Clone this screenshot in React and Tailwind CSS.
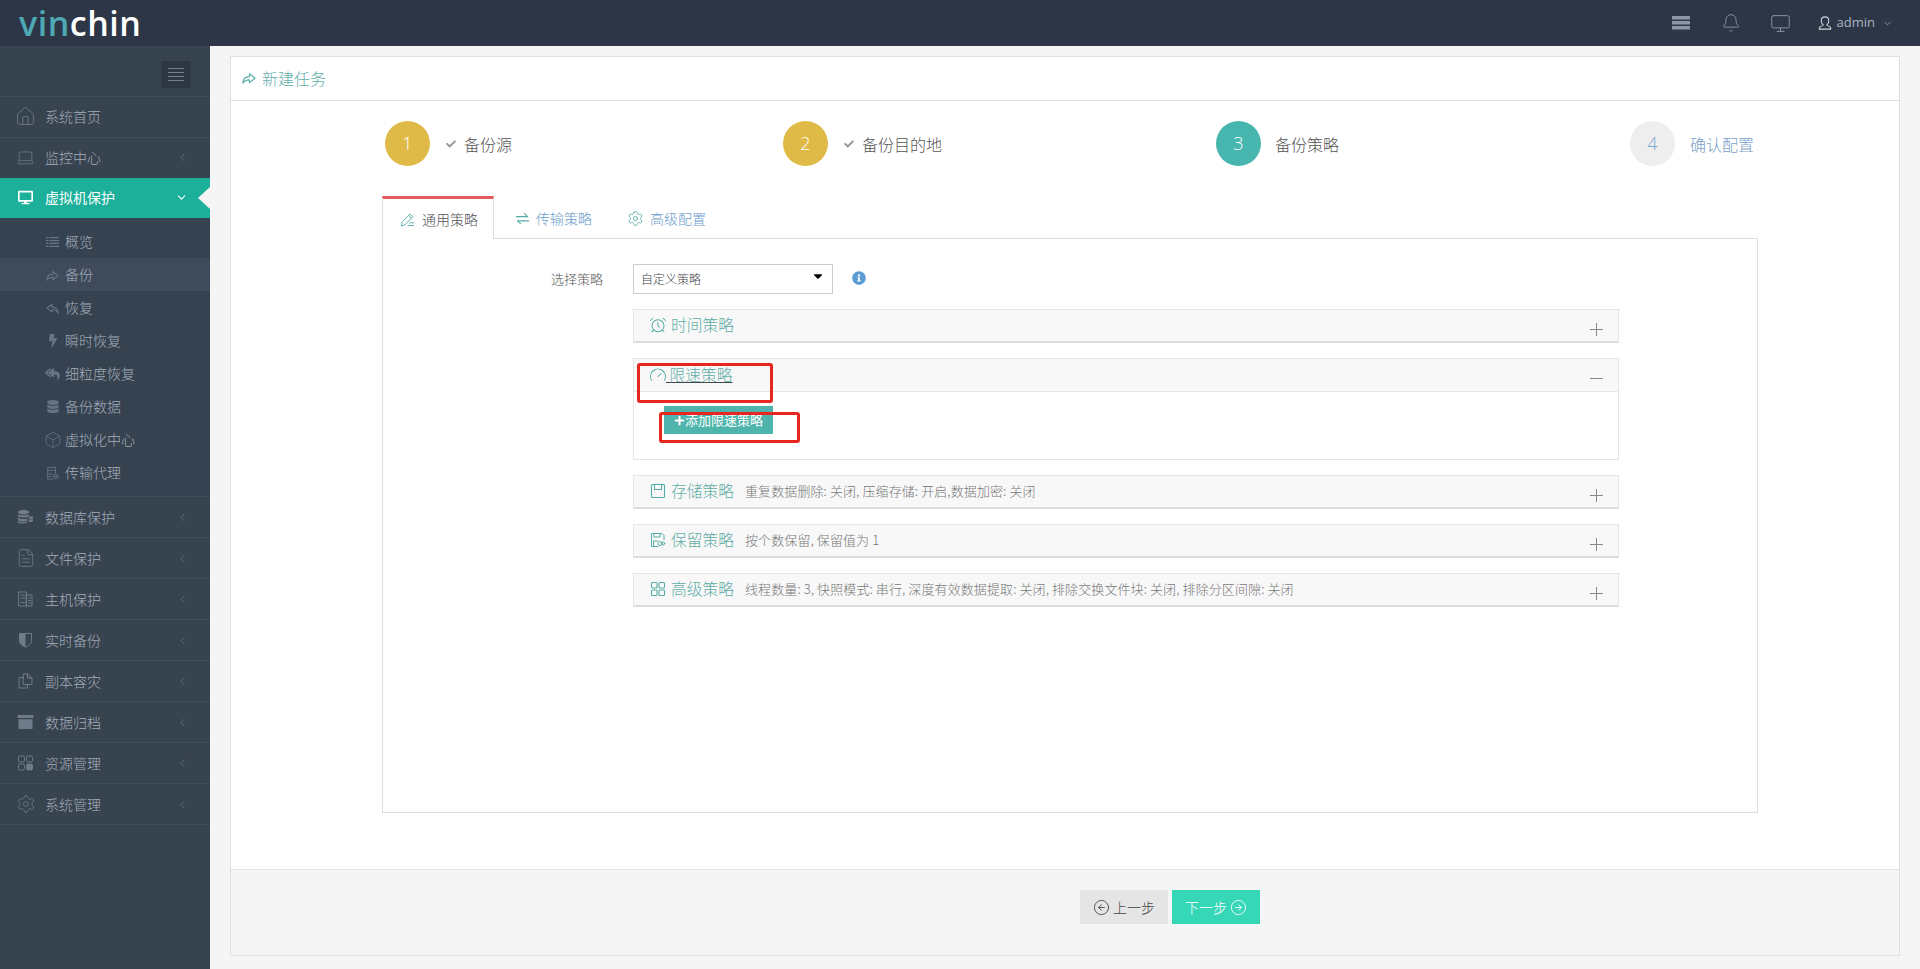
import { House, Laptop, Bell, Monitor, Settings, ChevronLeft, ChevronDown, AlarmClock, Gauge, CircleArrowLeft, CircleArrowRight, Box, FileText } from 'lucide-react';
import { FaBolt, FaCheck, FaDatabase, FaDesktop, FaInfoCircle, FaReplyAll, FaPlus, FaCaretDown } from 'react-icons/fa';

function Svg({ className, children, vb = '0 0 16 16', sw = 1 }) {
    return (
        <svg viewBox={vb} className={className} fill="none" stroke="currentColor" strokeWidth={sw} strokeLinecap="round" strokeLinejoin="round">
            {children}
        </svg>
    );
}

const ListIcon = ({ className }) => (
    <Svg className={className} sw={1.4}>
        <path d="M1 3h2M5 3h10M1 6.300h2M5 6.300h10M1 9.600h2M5 9.600h10M1 13h2M5 13h10" />
    </Svg>
);
const ShareIcon = ({ className }) => (
    <Svg className={className} sw={1.2}>
        <path d="M1.500 14c.2-4.500 3-7 7-7V4l6 4.800-6 4.700v-3c-3 0-5.200.8-7 3.500z" />
    </Svg>
);
const ReplyIcon = ({ className }) => (
    <Svg className={className} sw={1.2}>
        <path d="M14.500 14c-.2-4.500-3-7-7-7V4l-6 4.300 6 4.200v-2.700c3 0 5.200 1.200 7 4.200z" />
    </Svg>
);
const DocGearIcon = ({ className }) => (
    <Svg className={className}>
        <path d="M8 15H2.500V1.500h9V8M2.500 5h9M2.500 9h5M2.500 12h4" />
        <circle cx="11.500" cy="12" r="2.800" />
        <circle cx="11.500" cy="12" r="0.800" />
    </Svg>
);
const DbStackIcon = ({ className }) => (
    <svg viewBox="0 0 18 16" className={className} fill="currentColor">
        <ellipse cx="7" cy="2.800" rx="6" ry="2.500" />
        <path d="M1 5c1.500 1.500 10.500 1.500 12 0v2.300c-1.500 1.700-10.500 1.700-12 0zM1 8.700c1.500 1.500 8 1.700 10 .8v2.800c-2 .9-8.500.6-10-.8zM1 12.300c1.500 1.500 8 1.700 10 .8v.6c-2 1.500-8.500 1.500-10 0z" />
        <path d="M12.500 8l4.500-1v2c-1 .8-3 1.200-4.500 1zM12.500 11l4.500-.8v2c-1 .8-3 1.200-4.500 1z" />
    </svg>
);
const HostIcon = ({ className }) => (
    <Svg className={className}>
        <path d="M1.500 1h7.500v14H1.500zM9 4h5.500v11H9zM3.500 4h3.500M3.500 7h3.500M3.500 11.500h3.500M11 7h2M11 9.500h2M11 12h2" />
    </Svg>
);
const ShieldIcon = ({ className }) => (
    <svg viewBox="0 0 16 16" className={className}>
        <path d="M2 1.500h12v7c0 3.300-2.800 5.500-6 6.500-3.200-1-6-3.200-6-6.500z" fill="none" stroke="currentColor" strokeWidth="1" />
        <path d="M2 1.500h6V15c-3.200-1-6-3.200-6-6.500z" fill="currentColor" />
    </svg>
);
const CopyIcon = ({ className }) => (
    <Svg className={className}>
        <path d="M6 4.500H1.500V15h8.500v-3.500M6 1h4l4.500 4v6.500H6zM10 1v4h4.500" />
    </Svg>
);
const ArchiveIcon = ({ className }) => (
    <svg viewBox="0 0 16 16" className={className} fill="currentColor">
        <path d="M0 1h16v3H0zM1 5.200h14V15H1z" />
    </svg>
);
const GridIcon = ({ className }) => (
    <svg viewBox="0 0 16 16" className={className} fill="none" stroke="currentColor">
        <rect x="1" y="1" width="6" height="6" rx="1.500" />
        <rect x="9" y="1" width="6" height="6" rx="1.500" />
        <rect x="1" y="9" width="6" height="6" rx="1.500" />
        <rect x="9" y="9" width="6" height="6" rx="1.500" fill="currentColor" />
    </svg>
);
const Grid2Icon = ({ className }) => (
    <Svg className={className} sw={1.100}>
        <rect x="1.500" y="1.500" width="5.500" height="5.500" rx="1" />
        <rect x="9" y="1.500" width="5.500" height="5.500" rx="1" />
        <rect x="1.500" y="9" width="5.500" height="5.500" rx="1" />
        <rect x="9" y="9" width="5.500" height="5.500" rx="1" />
    </Svg>
);
const SaveIcon = ({ className }) => (
    <Svg className={className} sw={1.100}>
        <rect x="1.500" y="1.500" width="13" height="13" rx="1" />
        <path d="M4.500 1.500v5h7v-5" />
    </Svg>
);
const KeepIcon = ({ className }) => (
    <Svg className={className} sw={1}>
        <path d="M8 14.500H1.500v-13h10.500l2 2v4M4 1.500V5h6V1.500M3.500 14.500V9h4" />
        <circle cx="10" cy="11.500" r="2" />
        <circle cx="13.200" cy="11.500" r="1.500" />
    </Svg>
);
const PenIcon = ({ className }) => (
    <Svg className={className}>
        <path d="M1.500 14.500l1-4L10.500 2l3 3-8 8.500zM9 3.500l3 3M8.500 14.500h6M10.500 11.500h4" />
    </Svg>
);
const SwapIcon = ({ className }) => (
    <Svg className={className} sw={1.200}>
        <path d="M1.500 6h12L10 2.800M14.500 10.500h-12L6 13.500" />
    </Svg>
);
const ServerBars = ({ className }) => (
    <svg viewBox="0 0 18 14" className={className} fill="currentColor">
        <path d="M0 0h18v3.600H0zM0 5h18v3.600H0zM0 10h18v3.600H0z" />
    </svg>
);
const UserLine = ({ className }) => (
    <Svg className={className} sw={1.200}>
        <path d="M1.500 15h13v-1.500c0-1.500-3.500-2-4.500-3.200 1.500-1.300 2.300-3 2.300-5C12.300 2.800 10.500 1 8 1S3.700 2.800 3.700 5.300c0 2 .8 3.700 2.300 5-1 1.200-4.500 1.700-4.500 3.200z" />
    </Svg>
);
const MenuLines = ({ className }) => (
    <svg viewBox="0 0 16 13" className={className} stroke="currentColor" strokeWidth="1">
        <path d="M0 .5h16M0 4.500h16M0 8.500h16M0 12.500h16" />
    </svg>
);

const subMenu = [
    { label: '概览', icon: ListIcon, size: 'w-[15px] h-[14px]' },
    { label: '备份', icon: ShareIcon, active: true, size: 'w-[15px] h-[14px]' },
    { label: '恢复', icon: ReplyIcon, size: 'w-[15px] h-[14px]' },
    { label: '瞬时恢复', icon: FaBolt, size: 'w-[12px] h-[13px]' },
    { label: '细粒度恢复', icon: FaReplyAll, size: 'w-[15px] h-[14px]' },
    { label: '备份数据', icon: FaDatabase, size: 'w-[12px] h-[13px]' },
    { label: '虚拟化中心', icon: Box, size: 'w-[18px] h-[18px]' },
    { label: '传输代理', icon: DocGearIcon, size: 'w-[15px] h-[14px]' },
];

const menuBottom = [
    { label: '数据库保护', icon: DbStackIcon, size: 'w-[17px] h-[16px]' },
    { label: '文件保护', icon: FileText, size: 'w-[20px] h-[20px]' },
    { label: '主机保护', icon: HostIcon, size: 'w-[17px] h-[16px]' },
    { label: '实时备份', icon: ShieldIcon, size: 'w-[17px] h-[16px]' },
    { label: '副本容灾', icon: CopyIcon, size: 'w-[17px] h-[16px]' },
    { label: '数据归档', icon: ArchiveIcon, size: 'w-[17px] h-[16px]' },
    { label: '资源管理', icon: GridIcon, size: 'w-[17px] h-[16px]' },
    { label: '系统管理', icon: Settings, size: 'w-[20px] h-[20px]' },
];

function MenuItem({ item }) {
    const Icon = item.icon;
    return (
        <div className="flex items-center h-[41px] border-b border-[#424e5c] pl-[17px] pr-[21px]">
            <span className="flex justify-center w-[17px] text-[#6f7b89]">
                <Icon className={`shrink-0 ${item.size}`} strokeWidth={1} />
            </span>
            <span className="ml-[11px] text-[14px] text-[#a3adba] font-light">{item.label}</span>
            <ChevronLeft className="ml-auto w-[13px] h-[13px] text-[#6f7b89]" strokeWidth={1.25} />
        </div>
    );
}

function Sidebar() {
    return (
        <aside className="w-[210px] shrink-0 bg-[#384350]">
            <div className="flex justify-end pt-[15px] pr-[19px] h-[50px]">
                <div className="flex items-center justify-center w-[30px] h-[27px] bg-[#2e3845]">
                    <MenuLines className="w-[16px] h-[13px] text-[#77818d]" />
                </div>
            </div>
            <div className="border-t border-[#424e5c]">
                <div className="flex items-center h-[41px] pb-[2px] border-b border-[#424e5c] pl-[17px] pr-[21px]">
                    <span className="flex justify-center w-[17px] text-[#6f7b89]">
                        <House className="shrink-0 w-[21px] h-[21px]" strokeWidth={1} />
                    </span>
                    <span className="ml-[11px] text-[14px] text-[#a3adba] font-light">系统首页</span>
                </div>
                <div className="flex items-center h-[40px] pb-[2px] pl-[17px] pr-[21px]">
                    <span className="flex justify-center w-[17px] text-[#6f7b89]">
                        <Laptop className="shrink-0 w-[19px] h-[19px]" strokeWidth={1} />
                    </span>
                    <span className="ml-[11px] text-[14px] text-[#a3adba] font-light">监控中心</span>
                    <ChevronLeft className="ml-auto w-[13px] h-[13px] text-[#6f7b89]" strokeWidth={1.25} />
                </div>
            </div>
            <div className="relative flex items-center h-[40px] pb-[1px] bg-[#1cb09a] pl-[18px] pr-[22px] text-white">
                <FaDesktop className="w-[15px] h-[15px]" />
                <span className="ml-[12px] text-[14px]">虚拟机保护</span>
                <ChevronDown className="ml-auto w-[13px] h-[13px]" strokeWidth={2} />
                <div className="absolute right-0 top-[9px] w-0 h-0 border-y-[11px] border-y-transparent border-r-[12px] border-r-[#f5f5f5]"></div>
            </div>
            <div className="py-[7px] border-b border-[#424e5c] bg-[#364250]">
                {subMenu.map((item) => {
                    const Icon = item.icon;
                    return (
                        <div key={item.label} className={`flex items-center h-[33px] pl-[45px] ${item.active ? 'bg-[#3f4b5b]' : ''}`}>
                            <span className="w-[15px] flex justify-center text-[#687482]">
                                <Icon className={`shrink-0 ${item.size}`} strokeWidth={1} />
                            </span>
                            <span className="ml-[5px] text-[14px] text-[#a3adba] font-light">{item.label}</span>
                        </div>
                    );
                })}
            </div>
            {menuBottom.map((item) => (
                <MenuItem key={item.label} item={item} />
            ))}
        </aside>
    );
}

function TopBar() {
    return (
        <header className="flex items-center h-[46px] shrink-0 bg-[#2c3646]">
            <div className="ml-[19px] text-[34px] leading-[44px] tracking-[0.5px] font-semibold" style={{ fontFamily: '"Open Sans", sans-serif' }}>
                <span className="text-[#4fa9b5]">vin</span>
                <span className="text-white">chin</span>
            </div>
            <div className="ml-auto flex items-center">
                <ServerBars className="w-[18px] h-[14px] text-[#8c97a6]" />
                <Bell className="ml-[31px] w-[20px] h-[20px] text-[#8a95a3]" strokeWidth={1.1} />
                <Monitor className="ml-[29px] w-[21px] h-[21px] text-[#8a95a3]" strokeWidth={1.1} />
                <UserLine className="ml-[27px] w-[14px] h-[14px] text-[#cfd6de]" />
                <span className="ml-[5px] text-[13px] text-[#aab3bf]" style={{ fontFamily: '"Open Sans", sans-serif' }}>admin</span>
                <ChevronDown className="ml-[7px] mr-[27px] w-[11px] h-[11px] text-[#aab3bf]" strokeWidth={1.5} />
            </div>
        </header>
    );
}

const steps = [
    { n: 1, label: '备份源', done: true, width: 'w-[398px]' },
    { n: 2, label: '备份目的地', done: true, width: 'w-[433px]' },
    { n: 3, label: '备份策略', width: 'w-[414px]', current: true },
    { n: 4, label: '确认配置', width: 'w-[130px]', todo: true },
];

function Steps() {
    return (
        <div className="flex pl-[154px] pt-[20px]">
            {steps.map((s) => (
                <div key={s.n} className={`flex items-center ${s.width}`}>
                    <div className={`flex items-center justify-center w-[45px] h-[45px] rounded-full text-[18px] font-light ${s.done ? 'bg-[#e0ba47] text-white' : s.current ? 'bg-[#47b6ae] text-white' : 'bg-[#eeeeee] text-[#7ea6d3]'}`} style={{ fontFamily: '"Open Sans", sans-serif' }}>
                        {s.n}
                    </div>
                    {s.done && <FaCheck className="ml-[16px] w-[10px] h-[10px] text-[#999]" />}
                    <span className={`text-[16px] font-light ${s.done ? 'ml-[8px] text-[#555]' : s.current ? 'ml-[14px] text-[#555]' : 'ml-[15px] text-[#7b9fc9]'}`}>{s.label}</span>
                </div>
            ))}
        </div>
    );
}

function Tabs() {
    return (
        <div className="flex h-[43px] border-b border-[#dddddd] text-[14px]">
            <div className="flex items-center w-[112px] h-[43px] pl-[17px] bg-white border-x border-[#dddddd] border-t-[3px] border-t-[#e25d5f] -mb-px">
                <PenIcon className="w-[15px] h-[15px] text-[#58aca5]" />
                <span className="ml-[7px] text-[#555] font-light">通用策略</span>
            </div>
            <div className="flex items-center ml-[21px] pt-[3px] text-[#6a9cca] font-light">
                <SwapIcon className="w-[15px] h-[15px] text-[#58aca5]" />
                <span className="ml-[6px]">传输策略</span>
            </div>
            <div className="flex items-center ml-[35px] pt-[3px] text-[#6a9cca] font-light">
                <Settings className="w-[17px] h-[17px] text-[#58aca5]" strokeWidth={1.25} />
                <span className="ml-[6px]">高级配置</span>
            </div>
        </div>
    );
}

const panels = [
    { title: '存储策略', icon: SaveIcon, desc: '重复数据删除: 关闭, 压缩存储: 开启,数据加密: 关闭' },
    { title: '保留策略', icon: KeepIcon, desc: '按个数保留, 保留值为 1' },
    { title: '高级策略', icon: Grid2Icon, desc: '线程数量: 3, 快照模式: 串行, 深度有效数据提取: 关闭, 排除交换文件块: 关闭, 排除分区间隙: 关闭' },
];

function PlusSign() {
    return (
        <svg viewBox="0 0 13 13" className="absolute right-[15px] top-[13px] w-[13px] h-[13px] text-[#888]" stroke="currentColor" strokeWidth="1">
            <path d="M6.500 0v13M0 6.500h13" />
        </svg>
    );
}

function Collapsed({ icon: Icon, title, desc, big }) {
    return (
        <div className="relative flex items-center h-[34px] pl-[16px] pb-[1px] bg-[#f8f8f8] border border-[#e5e5e5] border-b-[2px] border-b-[#dddddd] mb-[15px]">
            <span className="flex justify-center w-[16px] text-[#58aca5]">
                <Icon className={`shrink-0 ${big ? 'w-[18px] h-[18px]' : 'w-[16px] h-[16px]'}`} strokeWidth={1.4} />
            </span>
            <span className="ml-[5px] text-[15.750px] text-[#62ada7] font-light">{title}</span>
            {desc && <span className="ml-[11px] text-[13px] tracking-[0.1px] text-[#777] font-light">{desc}</span>}
            <PlusSign />
        </div>
    );
}

function Panels() {
    return (
        <div className="ml-[250px] w-[986px]">
            <Collapsed icon={AlarmClock} title="时间策略" big />
            <div className="h-[102px] mb-[15px] border border-[#e5e5e5]">
                <div className="relative flex items-center h-[33px] pl-[16px] pb-[1px] bg-[#f8f8f8] border-b border-[#e5e5e5]">
                    <span className="flex justify-center w-[16px] text-[#58aca5]">
                        <Gauge className="shrink-0 w-[18px] h-[18px]" strokeWidth={1.4} />
                    </span>
                    <span className="text-[15.750px] text-[#62ada7] font-light underline decoration-[#444]">&nbsp;限速策略</span>
                    <svg viewBox="0 0 13 1" className="absolute right-[15px] top-[19px] w-[13px] h-px text-[#888]" stroke="currentColor" strokeWidth="2">
                        <path d="M0 .5h13" />
                    </svg>
                </div>
                <button className="flex items-center justify-center ml-[30px] mt-[14px] w-[109px] h-[28px] bg-[#4fb5ac] text-white text-[13px]">
                    <FaPlus className="w-[11px] h-[11px]" />
                    添加限速策略
                </button>
            </div>
            {panels.map((p) => (
                <Collapsed key={p.title} {...p} />
            ))}
        </div>
    );
}

function StrategyPane() {
    return (
        <div className="h-[574px] pt-[25px] border-x border-b border-[#dddddd] bg-white">
            <div className="flex items-center h-[30px] mb-[15px]">
                <span className="w-[220px] text-right text-[13px] text-[#555] font-light">选择策略</span>
                <div className="relative flex items-center ml-[30px] w-[200px] h-[30px] pl-[7px] border border-[#cccccc] text-[12px] text-[#444] font-light">
                    自定义策略
                    <FaCaretDown className="absolute right-[7px] top-[4px] w-[14px] h-[14px] text-black" />
                </div>
                <FaInfoCircle className="ml-[19px] -mt-[3px] w-[14px] h-[14px] text-[#5b9bd5]" />
            </div>
            <Panels />
        </div>
    );
}

function Footer() {
    return (
        <div className="flex justify-center gap-[4px] h-[86px] pt-[20px] pl-[210px] bg-[#f5f5f5] border-t border-[#e5e5e5]">
            <button className="flex items-center justify-center gap-[3px] w-[88px] h-[34px] bg-[#e5e5e5] text-[14px] text-[#444] font-light">
                <CircleArrowLeft className="w-[17px] h-[17px]" strokeWidth={1.25} />
                上一步
            </button>
            <button className="flex items-center justify-center gap-[3px] w-[88px] h-[34px] bg-[#36d7b7] text-[14px] text-white font-light">
                下一步
                <CircleArrowRight className="w-[17px] h-[17px]" strokeWidth={1.25} />
            </button>
        </div>
    );
}

export default function App() {
    return (
        <div className="relative flex flex-col h-screen overflow-hidden bg-[#f5f5f5]" style={{ fontFamily: '"Noto Sans CJK SC", "Noto Sans", sans-serif' }}>
            <TopBar />
            <div className="flex flex-1 min-h-0">
                <Sidebar />
                <main className="flex-1 pl-[20px] pr-[20px] pt-[10px] pb-[13px]">
                    <div className="flex flex-col h-full bg-white border border-[#e0e0e0]">
                        <div className="flex items-center h-[44px] shrink-0 pl-[10px] pb-[2px] border-b border-[#e0e0e0] text-[#62ada7]">
                            <ShareIcon className="w-[16px] h-[15px] text-[#58aca5]" />
                            <span className="ml-[5px] text-[16px] font-light">新建任务</span>
                        </div>
                        <div className="flex-1">
                            <Steps />
                            <div className="ml-[151px] w-[1376px] mt-[30px]">
                                <Tabs />
                                <StrategyPane />
                            </div>
                        </div>
                        <Footer />
                    </div>
                </main>
            </div>
            {/* red annotation boxes drawn over the screenshot */}
            <div className="absolute left-[637px] top-[363px] w-[136px] h-[40px] border-[3px] border-[#e8261f] rounded-[3px]"></div>
            <div className="absolute left-[659px] top-[412px] w-[141px] h-[31px] border-[3px] border-[#e8261f] rounded-[3px]"></div>
        </div>
    );
}
